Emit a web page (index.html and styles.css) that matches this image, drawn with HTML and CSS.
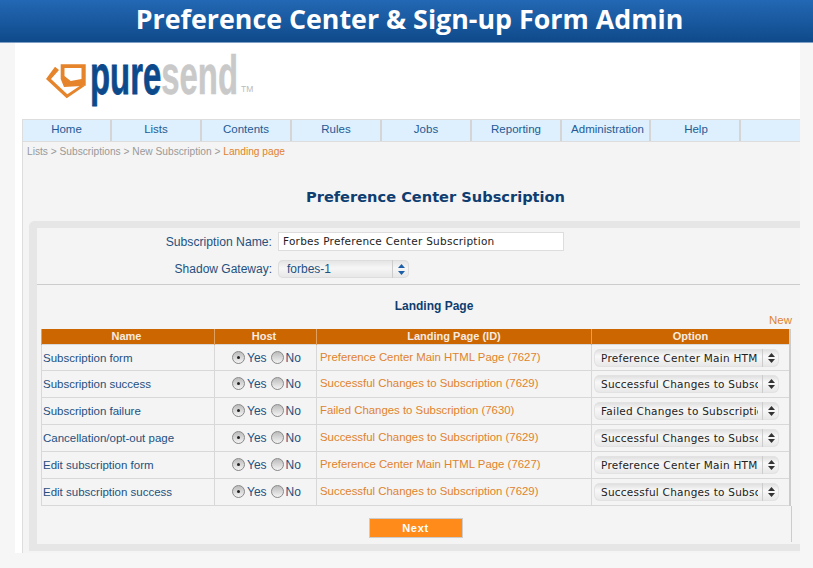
FILE: index.html
```html
<!DOCTYPE html>
<html>
<head>
  <title>Preference Center &amp; Sign-up Form Admin</title>
  <link rel="stylesheet" href="styles.css">
</head>
<body>
  <div class="banner">Preference Center &amp; Sign-up Form Admin</div>

  <div class="shot">
    <div class="logo-row">
      <svg class="logo" width="240" height="68" viewBox="0 0 240 68">
        <path fill="#e5842a" d="M15 18.7 L6 31 L26.7 50.3 L45 37.7 L40 37.7 L27.3 46.3 L11 31 L19 22 Z"/>
        <path fill="#e5842a" fill-rule="evenodd" d="M20.7 16.3 L45.7 16.3 L45.7 37.7 L24 39 L20.7 31 Z M24.5 20 L41.5 20 L41.5 31 L30.7 33 L24.5 28 Z"/>
        <text class="logo-word" x="50" y="46" textLength="148" lengthAdjust="spacingAndGlyphs"><tspan class="logo-pure">pure</tspan><tspan class="logo-send">send</tspan></text>
        <text class="logo-tm" x="201" y="44">TM</text>
      </svg>
    </div>

    <div class="main">
      <div class="nav">
        <div class="nav-item">Home</div>
        <div class="nav-item">Lists</div>
        <div class="nav-item">Contents</div>
        <div class="nav-item">Rules</div>
        <div class="nav-item">Jobs</div>
        <div class="nav-item">Reporting</div>
        <div class="nav-item">Administration</div>
        <div class="nav-item">Help</div>
      </div>
      <div class="crumbs">Lists &gt; Subscriptions &gt; New Subscription &gt; <span class="orange">Landing page</span></div>
      <h1>Preference Center Subscription</h1>

      <div class="panel">
        <div class="form-row">
          <label>Subscription Name:</label>
          <div class="text-input">Forbes Preference Center Subscription</div>
        </div>
        <div class="form-row row-gateway">
          <label>Shadow Gateway:</label>
          <div class="gateway">
            <span class="gateway-text">forbes-1</span>
            <span class="gateway-arrows">
              <svg width="7" height="11" viewBox="0 0 7 11"><path fill="#1c5fa8" d="M3.5 0 L7 4 L0 4 Z M3.5 11 L7 7 L0 7 Z"/></svg>
            </span>
          </div>
        </div>

        <h2>Landing Page</h2>
        <div class="new-link">New</div>

        <table>
          <thead>
            <tr>
              <th class="col-name">Name</th>
              <th class="col-host">Host</th>
              <th class="col-page">Landing Page (ID)</th>
              <th>Option</th>
            </tr>
          </thead>
          <tbody>
            <tr>
              <td>Subscription form</td>
              <td class="host"><span class="radio on"></span>Yes<span class="radio radio-no"></span>No</td>
              <td class="page orange">Preference Center Main HTML Page (7627)</td>
              <td><div class="select"><span class="select-text">Preference Center Main HTML Page</span><span class="select-arrows"><svg width="7" height="10" viewBox="0 0 7 10"><path fill="#333" d="M3.5 0 L7 4 L0 4 Z M3.5 10 L7 6 L0 6 Z"/></svg></span></div></td>
            </tr>
            <tr>
              <td>Subscription success</td>
              <td class="host"><span class="radio on"></span>Yes<span class="radio radio-no"></span>No</td>
              <td class="page orange">Successful Changes to Subscription (7629)</td>
              <td><div class="select"><span class="select-text">Successful Changes to Subscription</span><span class="select-arrows"><svg width="7" height="10" viewBox="0 0 7 10"><path fill="#333" d="M3.5 0 L7 4 L0 4 Z M3.5 10 L7 6 L0 6 Z"/></svg></span></div></td>
            </tr>
            <tr>
              <td>Subscription failure</td>
              <td class="host"><span class="radio on"></span>Yes<span class="radio radio-no"></span>No</td>
              <td class="page orange">Failed Changes to Subscription (7630)</td>
              <td><div class="select"><span class="select-text">Failed Changes to Subscription</span><span class="select-arrows"><svg width="7" height="10" viewBox="0 0 7 10"><path fill="#333" d="M3.5 0 L7 4 L0 4 Z M3.5 10 L7 6 L0 6 Z"/></svg></span></div></td>
            </tr>
            <tr>
              <td>Cancellation/opt-out page</td>
              <td class="host"><span class="radio on"></span>Yes<span class="radio radio-no"></span>No</td>
              <td class="page orange">Successful Changes to Subscription (7629)</td>
              <td><div class="select"><span class="select-text">Successful Changes to Subscription</span><span class="select-arrows"><svg width="7" height="10" viewBox="0 0 7 10"><path fill="#333" d="M3.5 0 L7 4 L0 4 Z M3.5 10 L7 6 L0 6 Z"/></svg></span></div></td>
            </tr>
            <tr>
              <td>Edit subscription form</td>
              <td class="host"><span class="radio on"></span>Yes<span class="radio radio-no"></span>No</td>
              <td class="page orange">Preference Center Main HTML Page (7627)</td>
              <td><div class="select"><span class="select-text">Preference Center Main HTML Page</span><span class="select-arrows"><svg width="7" height="10" viewBox="0 0 7 10"><path fill="#333" d="M3.5 0 L7 4 L0 4 Z M3.5 10 L7 6 L0 6 Z"/></svg></span></div></td>
            </tr>
            <tr>
              <td>Edit subscription success</td>
              <td class="host"><span class="radio on"></span>Yes<span class="radio radio-no"></span>No</td>
              <td class="page orange">Successful Changes to Subscription (7629)</td>
              <td><div class="select"><span class="select-text">Successful Changes to Subscription</span><span class="select-arrows"><svg width="7" height="10" viewBox="0 0 7 10"><path fill="#333" d="M3.5 0 L7 4 L0 4 Z M3.5 10 L7 6 L0 6 Z"/></svg></span></div></td>
            </tr>
          </tbody>
        </table>

        <div class="actions">
          <button type="button">Next</button>
        </div>
      </div>
    </div>
  </div>
</body>
</html>
```

FILE: styles.css
```css
html, body {
  margin: 0;
  height: 568px;
  overflow: hidden;
}

body {
  background-color: #f6f6f6;
  font-family: "Liberation Sans", Arial, sans-serif;
  font-size: 11.5px;
  color: #24507f;
}

.orange {
  color: #e0832c;
}

.banner {
  height: 42px;
  padding-left: 6px;
  line-height: 38px;
  background: linear-gradient(#2368b4, #0f4a8a);
  border-bottom: 1px solid #7fa0c4;
  color: #fff;
  font-family: "Open Sans", sans-serif;
  font-size: 26.8px;
  font-weight: 700;
  text-align: center;
}

.shot {
  margin-left: 15px;
  width: 785px;
  height: 510px;
  background-color: #fff;
  padding-left: 7px;
  box-sizing: border-box;
}

.logo-row {
  height: 76px;
}

.logo {
  display: block;
  margin-left: 18px;
  padding-top: 5px;
}

.logo-word {
  font-family: "Liberation Sans", sans-serif;
  font-size: 56px;
  font-weight: bold;
}

.logo-pure {
  fill: #0d4a8c;
  stroke: #0d4a8c;
  stroke-width: 0.8px;
}

.logo-send {
  fill: #c9c9c9;
  stroke: #c9c9c9;
  stroke-width: 0.5px;
}

.logo-tm {
  font-family: "Liberation Sans", sans-serif;
  font-size: 8.5px;
  fill: #bbb;
}

.main {
  height: 434px;
  background-color: #f4f4f4;
  border-left: 1px solid #ddd;
}

.nav {
  display: flex;
  height: 21px;
  background-color: #def0fd;
  border-top: 1px solid #ddd;
  border-bottom: 1px solid #ddd;
}

.nav-item {
  width: 88px;
  border-right: 2px solid #d5d5d5;
  line-height: 19px;
  font-size: 11.5px;
  text-align: center;
  color: #235a96;
}

.nav-item:first-child {
  width: 87px;
}

.nav-item:nth-child(7) {
  width: 83px;
  padding-left: 4px;
}

.nav-item:last-child {
  width: 86px;
  padding-left: 2px;
}

.crumbs {
  padding: 3px 0 0 4px;
  height: 14px;
  font-size: 10.2px;
  line-height: 14px;
  color: #999;
}

h1 {
  margin: 28px 0 0;
  padding-left: 48px;
  height: 34px;
  font-family: "DejaVu Sans", Verdana, sans-serif;
  font-size: 14.6px;
  line-height: 20px;
  text-align: center;
  color: #0f3d70;
}

.panel {
  margin-left: 6px;
  height: 316px;
  border: solid #e6e6e6;
  border-width: 7px 0 7px 8px;
  border-top-left-radius: 6px;
}

.form-row {
  display: flex;
  align-items: center;
  height: 19px;
  padding-top: 4px;
  font-size: 12.2px;
}

.form-row label {
  width: 235px;
  text-align: right;
  margin-right: 6px;
}

.row-gateway {
  height: 18px;
  padding: 9px 0 6px;
  border-bottom: 1px solid #ccc;
  font-size: 12px;
}

.text-input {
  width: 280px;
  height: 17px;
  padding-left: 4px;
  border: 1px solid #ddd;
  background-color: #fff;
  font-family: "DejaVu Sans", sans-serif;
  font-size: 10.5px;
  letter-spacing: 0.26px;
  line-height: 17px;
  color: #222;
}

.gateway {
  display: flex;
  width: 131px;
  height: 18px;
  border-radius: 5px;
  background: linear-gradient(#e2e2e2, #f6f6f6 45%, #e6e6e6);
  box-shadow: inset 0 0 0 1px #ddd;
  line-height: 18px;
}

.gateway-text {
  flex: 1;
  padding-left: 9px;
}

.gateway-arrows {
  display: flex;
  align-items: center;
  justify-content: center;
  width: 16px;
  border-left: 1px solid #ccc;
}

h2 {
  margin: 14px 0 0;
  height: 14px;
  font-size: 12px;
  line-height: 14px;
  text-align: center;
  width: 794px;
  color: #0f3d70;
}

.new-link {
  width: 755px;
  height: 14px;
  font-size: 11.5px;
  line-height: 14px;
  text-align: right;
  color: #e0832c;
}

table {
  margin: 2px 0 0 4px;
  width: 750px;
  border-collapse: collapse;
  table-layout: fixed;
  border-right: 2px solid #ccc;
}

th {
  height: 15px;
  padding: 0;
  background-color: #cc6600;
  border-left: 1px solid #e0a060;
  color: #f6ebe0;
  font-size: 11px;
  line-height: 15px;
}

td {
  height: 27px;
  padding: 0 0 0 1px;
  border: 1px solid #d8d8d8;
  box-sizing: border-box;
  white-space: nowrap;
  overflow: hidden;
}

tbody tr:first-child td {
  height: 26px;
}

.col-name {
  width: 169px;
  padding-right: 3px;
}

.col-host {
  width: 98px;
  padding-right: 3px;
}

.col-page {
  width: 274px;
}

.host {
  padding-left: 17px;
  font-size: 12px;
}

.page {
  padding: 0 0 2px 3px;
  font-size: 11.4px;
}

.radio {
  display: inline-block;
  position: relative;
  width: 13px;
  height: 13px;
  margin-right: 2px;
  border: 1px solid #8a8a8a;
  border-radius: 50%;
  background: linear-gradient(#bbb, #f4f4f4);
  vertical-align: -2px;
  box-sizing: border-box;
}

.radio-no {
  margin: 0 2px 0 4px;
}

.radio.on::after {
  content: "";
  position: absolute;
  left: 4px;
  top: 4px;
  width: 3px;
  height: 3px;
  border-radius: 50%;
  background-color: #222;
}

.select {
  display: flex;
  width: 185px;
  height: 18px;
  margin-left: 1px;
  border-radius: 6px;
  background: linear-gradient(#dcdcdc, #f8f8f8 40%, #e6e6e6);
  box-shadow: inset 0 0 0 1px #e2e2e2;
  line-height: 18px;
}

.select-text {
  width: 157px;
  margin-left: 7px;
  overflow: hidden;
  white-space: nowrap;
  font-family: "DejaVu Sans", sans-serif;
  font-size: 10.5px;
  letter-spacing: 0.25px;
  color: #222;
}

.select-arrows {
  display: flex;
  align-items: center;
  justify-content: center;
  width: 16px;
  margin-left: 4px;
  border-left: 1px solid #ccc;
}

.actions {
  width: 751px;
  height: 24px;
  padding: 12px 0 0 3px;
  border-right: 1px solid #ccc;
  text-align: center;
}

button {
  display: block;
  width: 94px;
  height: 20px;
  margin: 0 auto;
  padding: 0;
  border: 1px solid #ccc;
  background-color: #ff8c1a;
  color: #fff;
  font-family: "Liberation Sans", sans-serif;
  font-size: 11px;
  font-weight: bold;
  letter-spacing: 0.7px;
}
```
